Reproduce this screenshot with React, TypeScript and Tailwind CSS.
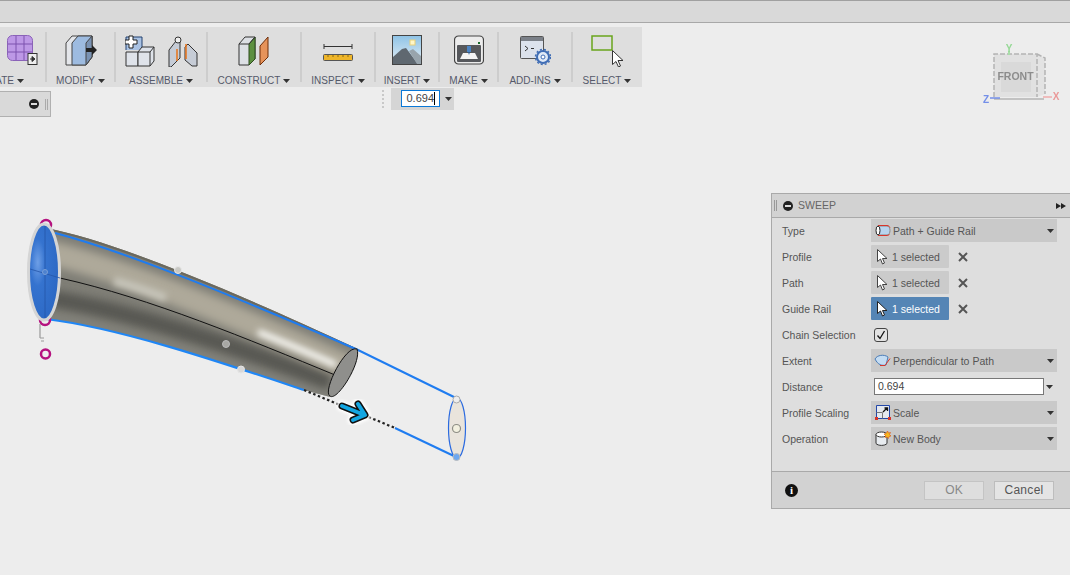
import type { ReactNode } from 'react';

const Caret = ({ className = 'ml-[3px]' }: { className?: string }) => (
  <svg width="7" height="4" viewBox="0 0 7 4" className={className}>
    <path d="M0 0h7L3.5 4z" fill="#333" />
  </svg>
);

const ToolGroup = ({ label, width, icon, clip }: { label: string; width: string; icon: ReactNode; clip?: boolean }) => (
  <div className={`flex flex-col ${width} ${clip ? 'items-end overflow-hidden' : 'items-center'}`}>
    <div className="flex h-[32px] items-start">{icon}</div>
    <div className={`mt-[7px] flex h-[13px] items-center whitespace-nowrap text-[10px] leading-[13px] text-[#55596a] ${clip ? 'mr-[21px]' : ''}`}>
      {label}
      <Caret />
    </div>
  </div>
);

const Divider = () => <div className="-mt-[3px] h-[50px] w-[2px] shrink-0 bg-[#cdcdcd]" />;

const CreateIcon = () => (
  <svg width="32" height="32" viewBox="0 0 32 32" className="mr-[6px]">
    <rect x="0.500" y="0.500" width="25" height="25" rx="5" fill="#bd98e6" stroke="#8a62b8" />
    <path d="M1 9h24M1 17h24M9 1v24M17 1v24" stroke="#7c52ae" strokeWidth="1" />
    <rect x="21" y="18.500" width="9" height="11" fill="#eee" stroke="#333" />
    <path d="M23 24h3M25 21.500l3 2.500-3 2.500z" fill="#333" stroke="#333" />
  </svg>
);

const ModifyIcon = () => (
  <svg width="32" height="32" viewBox="0 0 32 32">
    <path d="M1 8l6-7h20v21l-6 8H1z" fill="#e4e6ea" stroke="#444" />
    <path d="M7 8l6-7h14v21l-6 8H7z" fill="#9dbbe0" stroke="#444" />
    <path d="M21 8l6-7v21l-6 8z" fill="#7a93b4" stroke="#444" />
    <path d="M21 13h6V10l5 5-5 5v-3h-6z" fill="#222" />
  </svg>
);

const AssembleBlocks = () => (
  <svg width="30" height="32" viewBox="0 0 30 32">
    <path d="M1 15V2h16v13" fill="#a9c2e4" stroke="#23406e" />
    <path d="M1 17h12v14H1z" fill="#dfe3ea" stroke="#333" />
    <path d="M13 17l4-5h12v14l-4 5H13z" fill="#dfe3ea" stroke="#333" />
    <path d="M13 17h12l4-5M25 17v14" fill="none" stroke="#333" />
    <path d="M4 1h4v4h4v4H8v4H4V9H0V5h4z" fill="#fff" stroke="#222" />
  </svg>
);

const AssembleJoint = () => (
  <svg width="30" height="32" viewBox="0 0 30 32" className="ml-[13px]">
    <path d="M1 15l7-9 4-3v20l-9 9H1z" fill="#c6ccd6" stroke="#333" />
    <path d="M17 12l3-3 9 9v13l-5 0-7-6z" fill="#c6ccd6" stroke="#333" />
    <ellipse cx="10" cy="5" rx="3" ry="3" fill="#eee" stroke="#333" />
    <path d="M9 14v12M18 9v15" stroke="#e8731a" strokeWidth="1.500" />
  </svg>
);

const ConstructIcon = () => (
  <svg width="32" height="32" viewBox="0 0 32 32">
    <path d="M1 9l6-7h10v22l-6 6H1z" fill="#dde0e5" stroke="#333" />
    <path d="M11 9l6-7v22l-6 6z" fill="#5d9040" stroke="#2d4d1e" />
    <path d="M1 9h10l6-7" fill="none" stroke="#333" />
    <path d="M22 11l8-9v20l-8 8z" fill="#e6935a" stroke="#6e2d08" />
  </svg>
);

const InspectIcon = () => (
  <svg width="30" height="32" viewBox="0 0 30 32">
    <path d="M1 9v5M1 11.500h28M29 9v5" stroke="#333" />
    <rect x="0.500" y="19.500" width="29" height="6" rx="1" fill="#eeb52a" stroke="#555" />
    <path d="M5 20v2M10 20v2M15 20v2M20 20v2M25 20v2" stroke="#8a6a10" />
  </svg>
);

const InsertIcon = () => (
  <svg width="30" height="32" viewBox="0 0 30 32">
    <defs>
      <linearGradient id="sky" x1="0" y1="0" x2="0" y2="1">
        <stop offset="0" stopColor="#8ec3e6" />
        <stop offset="1" stopColor="#e6eff5" />
      </linearGradient>
    </defs>
    <rect x="0.500" y="0.500" width="29" height="29" fill="url(#sky)" stroke="#444" />
    <rect x="18" y="5" width="5" height="5" fill="#fff7c8" stroke="#e8cf7a" />
    <path d="M1 29V22l9-8 4-1 12 16z" fill="#5f6870" />
    <path d="M17 16l4-2 8 7v8h-4z" fill="#98a4ac" />
  </svg>
);

const MakeIcon = () => (
  <svg width="30" height="32" viewBox="0 0 30 32">
    <rect x="0.500" y="1" width="29" height="28" rx="4" fill="#ececec" stroke="#444" strokeWidth="1.200" />
    <rect x="3" y="10" width="24" height="17" rx="1" fill="#56585c" />
    <path d="M6 24l3-6h12l3 6z" fill="#f4f4f4" />
    <rect x="13" y="11" width="4" height="6" fill="#4b84c4" />
    <path d="M14 17h2l-1 3z" fill="#2b5c96" />
    <rect x="24" y="7" width="2" height="2" fill="#1b6a2c" />
  </svg>
);

const AddInsIcon = () => (
  <svg width="31" height="32" viewBox="0 0 31 32">
    <rect x="0.500" y="1.500" width="23" height="22" rx="1" fill="#dce2ec" stroke="#555" />
    <rect x="1" y="2" width="22" height="4" fill="#7b8088" />
    <path d="M5 11l3 2.500-3 2.500" fill="none" stroke="#333" />
    <path d="M11 13.500h3" stroke="#333" />
    <circle cx="23" cy="22" r="6" fill="#dfe9f7" stroke="#3f6db5" strokeWidth="2" />
    <circle cx="23" cy="22" r="7.500" fill="none" stroke="#3f6db5" strokeWidth="1.500" strokeDasharray="2 2" />
    <circle cx="23" cy="22" r="2" fill="#fff" stroke="#3f6db5" />
  </svg>
);

const CursorIcon = ({ fill = '#fff', stroke = '#333', size = 16 }: { fill?: string; stroke?: string; size?: number }) => (
  <svg width={(size * 11) / 16} height={size} viewBox="0 0 11 16">
    <path d="M0.500 0.500v12l3-2.500 2 5 2-1-2-4.500h4.500z" fill={fill} stroke={stroke} />
  </svg>
);

const SelectIcon = () => (
  <svg width="32" height="32" viewBox="0 0 32 32">
    <rect x="1" y="1" width="20" height="14" fill="none" stroke="#69a51c" strokeWidth="1.500" />
    <path d="M21.500 15.500v14l3.500-3 2.500 5.500 2-1-2.500-5.500h5z" fill="#fff" stroke="#333" />
  </svg>
);

const Row = ({ label, children }: { label: string; children: ReactNode }) => (
  <div className="mb-[3px] flex h-[23px] items-center">
    <div className="w-[89px] shrink-0 pt-[2px] text-[#555]">{label}</div>
    {children}
  </div>
);

const SelectBox = ({ icon, text }: { icon: ReactNode; text: string }) => (
  <div className="flex h-[23px] w-[186px] items-center bg-[#c9c9c9] pl-[2px] pr-[2px]">
    <div className="flex w-[19px] shrink-0 justify-center">{icon}</div>
    <span className="ml-[1px] pt-[2px] text-[#555]">{text}</span>
    <Caret className="ml-auto mr-[1px]" />
  </div>
);

const Selection = ({ active }: { active?: boolean }) => (
  <>
    <div className={`flex h-[23px] w-[78px] items-center rounded-[1px] pl-[6px] ${active ? 'bg-[#5585b5] text-white' : 'bg-[#cbcbcb] text-[#555]'}`}>
      <CursorIcon stroke={active ? '#222' : '#444'} />
      <span className="ml-[4px] pt-[2px]">1 selected</span>
    </div>
    <svg width="10" height="10" viewBox="0 0 10 10" className="ml-[9px]">
      <path d="M1 1l8 8M9 1l-8 8" stroke="#555" strokeWidth="2" />
    </svg>
  </>
);

const Model = () => (
  <svg viewBox="0 0 1070 575" className="absolute inset-0 h-full w-full">
    <defs>
      <clipPath id="tube">
        <path d="M46 228C110 240 220 285 358 349L330 397L304 390C220 362 120 328 46 319Z" />
      </clipPath>
      <filter id="soft" x="-20%" y="-20%" width="140%" height="140%">
        <feGaussianBlur stdDeviation="4" />
      </filter>
      <filter id="softer" x="-20%" y="-50%" width="140%" height="200%">
        <feGaussianBlur stdDeviation="3" />
      </filter>
      <filter id="glow" x="-30%" y="-30%" width="160%" height="160%">
        <feGaussianBlur stdDeviation="1.500" />
      </filter>
      <filter id="haze" x="-10%" y="-10%" width="120%" height="120%">
        <feGaussianBlur stdDeviation="0.500" />
      </filter>
      <radialGradient id="mouth" cx="0.300" cy="0.400" r="0.700">
        <stop offset="0" stopColor="#6e9fe6" />
        <stop offset="0.350" stopColor="#3573cf" />
        <stop offset="1" stopColor="#2c68c4" />
      </radialGradient>
    </defs>
    <g clipPath="url(#tube)">
      <rect x="0" y="200" width="400" height="220" fill="#7f7e76" />
      <g filter="url(#soft)" fill="none">
        <path d="M46 252C110 266 220 308 350 368" stroke="#aea99a" strokeWidth="24" />
        <path d="M46 298C120 308 240 348 330 382" stroke="#585853" strokeWidth="17" />
        <path d="M46 319C120 329 240 367 330 399" stroke="#83837d" strokeWidth="6" />
      </g>
      <path d="M46 227C110 239 220 284 358 348" fill="none" stroke="#6b695e" strokeWidth="6" />
      <g filter="url(#softer)" fill="none">
        <path d="M114 281C130 285 150 292 166 298" stroke="#c8c6bb" strokeWidth="8" />
        <path d="M258 332C280 341 310 353 336 365" stroke="#fafaf6" strokeWidth="6" />
      </g>
    </g>
    <path d="M55 233C120 250 220 290 358 350L456 398" fill="none" stroke="#1f7cf0" strokeWidth="2" />
    <path d="M46 319C120 328 220 362 304 390" fill="none" stroke="#1f86f5" strokeWidth="2.200" />
    <path d="M60 278C150 298 250 340 335 375" fill="none" stroke="#111" strokeWidth="1" />
    <path d="M357 349C362 362 337 402 330 396C322 392 345 345 357 349Z" fill="#8f8f8c" stroke="#111" strokeWidth="1" />
    <path d="M304 390L395 428" fill="none" stroke="#222" strokeWidth="2.200" strokeDasharray="2.500 2.500" />
    <path d="M395 428L456 457" fill="none" stroke="#1f7cf0" strokeWidth="2" />

    <g fill="none" strokeLinecap="round" strokeLinejoin="round">
      <g stroke="#fff" strokeWidth="11" filter="url(#glow)">
        <path d="M342 406L362 414M358 404L365 415L353 420" />
      </g>
      <g stroke="#111" strokeWidth="7">
        <path d="M342 406L362 414M358 404L365 415L353 420" />
      </g>
      <g stroke="#13a6e2" strokeWidth="4">
        <path d="M342 406L362 414M358 404L365 415L353 420" />
      </g>
    </g>

    <ellipse cx="457" cy="428" rx="8.500" ry="30" fill="#e9e4dc" stroke="#2a6ae0" strokeWidth="1.200" />
    <circle cx="456.500" cy="428.500" r="4" fill="#f2f0df" stroke="#8d8d85" strokeWidth="1.200" />
    <circle cx="456.500" cy="399.500" r="3.500" fill="#ededed" stroke="#aaa" />
    <circle cx="456.500" cy="457" r="3.500" fill="#6ea8f0" stroke="#bbb" />

    <circle cx="46" cy="225" r="5" fill="none" stroke="#b5127f" strokeWidth="2.500" />
    <circle cx="45" cy="320" r="5" fill="none" stroke="#b5127f" strokeWidth="2.500" />
    <circle cx="45.500" cy="354" r="4.500" fill="#eee" stroke="#b5127f" strokeWidth="2.500" />
    <path d="M40 324v14M40 338h4M41 341h3" fill="none" stroke="#999" strokeWidth="1.200" />
    <ellipse cx="44" cy="272" rx="15.500" ry="48" fill="url(#mouth)" stroke="#d5d5d5" strokeWidth="3" />
    <path d="M45 226V318M30 269L60 278" stroke="#2456a8" strokeWidth="0.800" fill="none" />
    <circle cx="45" cy="272" r="2.500" fill="#4d82cf" stroke="#7a9fd6" />

    <circle cx="178" cy="270" r="3.500" fill="#c8c8c4" stroke="#e8e8e8" />
    <circle cx="226" cy="344" r="3.500" fill="#a8a8a4" stroke="#bbb" />
    <circle cx="241" cy="369.500" r="3.500" fill="#d8d8d8" stroke="#e5e5e5" />

    <g opacity="0.850" filter="url(#haze)">
      <path d="M1037 54l8 4v36l-8 3z" fill="#e2e2e2" />
      <rect x="994" y="54" width="43" height="43" fill="#e0e0e0" />
      <rect x="1001" y="62" width="30" height="30" fill="#d6d6d6" />
      <path d="M994 97V54h43v43M1037 54l8 4v36" fill="none" stroke="#aaa" strokeWidth="1.500" strokeDasharray="5 2" />
      <path d="M994 99h50" stroke="#bbb" strokeWidth="2" />
      <text x="1015.500" y="80" textAnchor="middle" fontFamily="'Liberation Sans', Arial, sans-serif" fontWeight="700" fontSize="10.500" fill="#7c7c7c">FRONT</text>
      <path d="M1009 55v-4" stroke="#9fdc9f" strokeWidth="2" />
      <text x="1009" y="52" textAnchor="middle" fontFamily="'Liberation Sans', Arial, sans-serif" fontWeight="700" fontSize="10" fill="#86d586">Y</text>
      <path d="M990 98h10" stroke="#5f7fe8" strokeWidth="1.500" />
      <text x="986" y="103" textAnchor="middle" fontFamily="'Liberation Sans', Arial, sans-serif" fontWeight="700" fontSize="10" fill="#5f7fe8">Z</text>
      <path d="M1043 97h9" stroke="#f0a0a0" strokeWidth="1.500" />
      <text x="1056" y="100" textAnchor="middle" fontFamily="'Liberation Sans', Arial, sans-serif" fontWeight="700" fontSize="10" fill="#ea8a8a">X</text>
    </g>
  </svg>
);

const SweepPanel = () => (
  <div className="absolute left-[771px] top-[193px] flex h-[316px] w-[299px] flex-col border-b border-l border-t border-[#a9a9a9] bg-[#dedede] text-[10.500px] leading-[13px]">
    <div className="flex h-[24px] shrink-0 items-center border-b border-[#a9a9a9] bg-[#d2d2d2] pl-[2px]">
      <div className="h-[11px] w-[3px] border-x border-[#999]" />
      <div className="ml-[6px] flex h-[10px] w-[10px] items-center justify-center rounded-full bg-[#222]">
        <div className="h-[2px] w-[6px] bg-[#ddd]" />
      </div>
      <span className="ml-[5px] text-[#666]">SWEEP</span>
      <svg width="10" height="6" viewBox="0 0 10 6" className="ml-auto mr-[4px]">
        <path d="M0 0l5 3-5 3zM5 0l5 3-5 3z" fill="#222" />
      </svg>
    </div>
    <div className="flex-1 pl-[10px] pt-[1px]">
      <Row label="Type">
        <SelectBox
          text="Path + Guide Rail"
          icon={
            <svg width="16" height="13" viewBox="0 0 16 13">
              <path d="M3 2h9c4 0 4 9 0 9H3z" fill="#b8d4ee" stroke="#888" />
              <path d="M3 1.500h9c1.500 0 2.500 1 3 2M3 11.500h9c1 0 2-.5 2.500-1.500" fill="none" stroke="#d8352a" />
              <ellipse cx="3" cy="6.500" rx="2" ry="4.500" fill="#fff" stroke="#222" />
            </svg>
          }
        />
      </Row>
      <Row label="Profile"><Selection /></Row>
      <Row label="Path"><Selection /></Row>
      <Row label="Guide Rail"><Selection active /></Row>
      <Row label="Chain Selection">
        <div className="ml-[3px] flex h-[14px] w-[14px] items-center justify-center rounded-[3px] border border-[#444] bg-[#e2e2e2]">
          <svg width="10" height="10" viewBox="0 0 10 10">
            <path d="M1.500 5.500l2.500 3L8.500 1" fill="none" stroke="#111" strokeWidth="1.300" />
          </svg>
        </div>
      </Row>
      <Row label="Extent">
        <SelectBox
          text="Perpendicular to Path"
          icon={
            <svg width="17" height="13" viewBox="0 0 17 13">
              <path d="M1 5c2-4 9-5 13-2l-2 8c-4 1-8 0-11-6z" fill="#c4dcf2" stroke="#4a7cb8" />
              <path d="M6 11.500h5l5-7" fill="none" stroke="#d8352a" />
            </svg>
          }
        />
      </Row>
      <Row label="Distance">
        <div className="ml-[3px] flex h-[17px] w-[170px] items-center border border-[#777] bg-white pl-[3px] text-[#444]">0.694</div>
        <Caret className="ml-[2px]" />
      </Row>
      <Row label="Profile Scaling">
        <SelectBox
          text="Scale"
          icon={
            <svg width="16" height="15" viewBox="0 0 16 15">
              <path d="M1.500 13.500V.5h13v13z" fill="#e4e8ee" stroke="#2347a8" />
              <path d="M1.500 7.500h6v6" fill="none" stroke="#777" />
              <path d="M8 7l4-4M9.500 3H12.500V6" fill="none" stroke="#111" strokeWidth="1.300" />
              <path d="M0 12h3v3H0zM13 12h3v3h-3z" fill="#d8352a" />
            </svg>
          }
        />
      </Row>
      <Row label="Operation">
        <SelectBox
          text="New Body"
          icon={
            <svg width="16" height="15" viewBox="0 0 16 15">
              <path d="M1 3.500v9c2 2.500 9 2.500 11 0v-9z" fill="#e8ecf0" stroke="#333" />
              <ellipse cx="6.500" cy="3.500" rx="5.500" ry="2.500" fill="#fff" stroke="#333" />
              <path d="M12.500 0l1 2 2-.5-1 2 1.500 1.500-2 .5-.5 2-1.500-1.500-2 .5.500-2-1.500-1.500 2-.5z" fill="#f5b81f" stroke="#d8501a" strokeWidth="0.600" />
            </svg>
          }
        />
      </Row>
    </div>
    <div className="flex h-[37px] shrink-0 items-center border-t border-[#a9a9a9] bg-[#d2d2d2] pl-[13px] pr-[16px] text-[12px]">
      <div className="flex h-[13px] w-[13px] items-center justify-center rounded-full bg-[#111] font-['Liberation_Serif',serif] text-[11px] font-bold leading-none text-white">i</div>
      <button className="ml-auto h-[19px] w-[60px] border border-[#c4c4c4] bg-[#dedede] pt-px text-[#888]">OK</button>
      <button className="ml-[10px] h-[19px] w-[60px] border border-[#bdbdbd] bg-[#e4e4e4] pt-px tracking-[0.3px] text-[#555]">Cancel</button>
    </div>
  </div>
);

export default function App() {
  return (
    <div className="relative h-[575px] w-[1070px] overflow-hidden bg-[#ededed] font-['Liberation_Sans',Arial,sans-serif]">
      <Model />
      <div className="relative h-[23px] border-b border-t border-b-[#a8a8a8] border-t-[#a0a0a0] bg-[#d9d9d9]" />
      <div className="relative mt-[4px] flex h-[60px] w-[642px] bg-[#dedede] pt-[8px]">
        <ToolGroup label="CREATE" width="w-[45px]" clip icon={<CreateIcon />} />
        <Divider />
        <ToolGroup label="MODIFY" width="w-[67px]" icon={<ModifyIcon />} />
        <Divider />
        <ToolGroup label="ASSEMBLE" width="w-[90px]" icon={<div className="flex"><AssembleBlocks /><AssembleJoint /></div>} />
        <Divider />
        <ToolGroup label="CONSTRUCT" width="w-[92px]" icon={<ConstructIcon />} />
        <Divider />
        <ToolGroup label="INSPECT" width="w-[72px]" icon={<InspectIcon />} />
        <Divider />
        <ToolGroup label="INSERT" width="w-[62px]" icon={<InsertIcon />} />
        <Divider />
        <ToolGroup label="MAKE" width="w-[57px]" icon={<MakeIcon />} />
        <Divider />
        <ToolGroup label="ADD-INS" width="w-[72px]" icon={<AddInsIcon />} />
        <Divider />
        <ToolGroup label="SELECT" width="w-[68px]" icon={<SelectIcon />} />
      </div>
      <div className="relative flex items-start">
        <div className="mt-[4px] flex h-[26px] w-[51px] items-center justify-end rounded-br-[1px] border-b border-r border-t border-[#b0b0b0] bg-[#d9d9d9] pr-[2px]">
          <div className="flex h-[10px] w-[10px] items-center justify-center rounded-full bg-[#222]">
            <div className="h-[2px] w-[6px] bg-[#ddd]" />
          </div>
          <div className="ml-[6px] h-[11px] w-[3px] border-x border-[#aaa]" />
        </div>
        <div className="ml-[331px] mt-[3px] h-[18px] w-[2px] border-l-2 border-dotted border-[#c8c8c8]" />
        <div className="ml-[7px] mt-[1px] flex h-[22px] w-[63px] items-start bg-[#d5d5d5] pl-[10px] pt-[2px]">
          <div className="flex h-[17px] w-[39px] items-center justify-end border border-[#0a78d7] bg-white pr-[4px] text-[11px] text-[#444]">
            0.694<span className="h-[13px] w-px bg-black" />
          </div>
          <Caret className="ml-[5px] mt-[7px]" />
        </div>
      </div>
      <SweepPanel />
    </div>
  );
}
